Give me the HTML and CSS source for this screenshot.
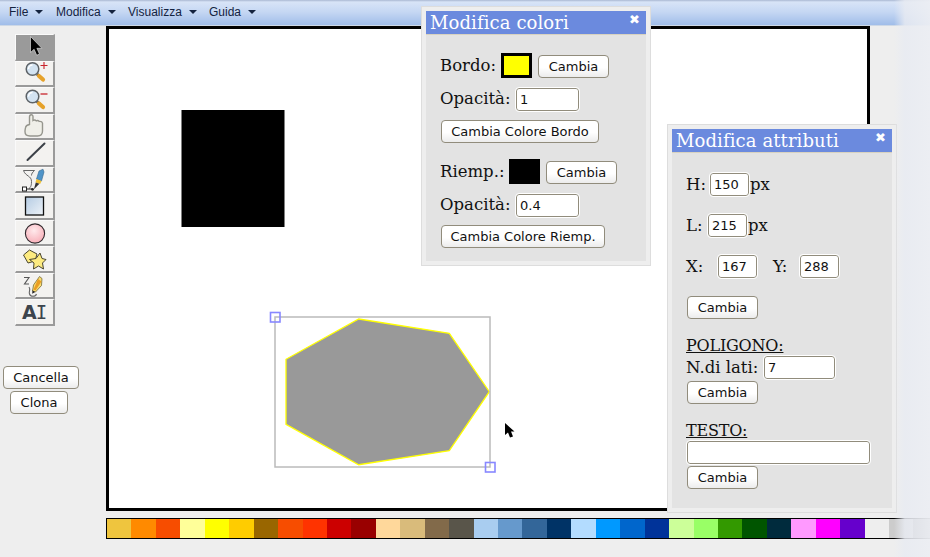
FILE: index.html
```html
<!DOCTYPE html>
<html lang="it">
<head>
    <meta charset="UTF-8">
    <title>Editor</title>
    <link rel="stylesheet" href="styles.css">
</head>
<body>
    <div class="menubar">
        <span class="menu-item menu-file">File</span>
        <span class="menu-item menu-modifica">Modifica</span>
        <span class="menu-item menu-visualizza">Visualizza</span>
        <span class="menu-item">Guida</span>
    </div>

    <div class="main">
        <div class="sidebar">
            <div class="tools">
                <div class="tool selected">
                    <svg class="icon" viewBox="0 0 37 24"><path d="M14.500 1.500v16l3.600-3.200 2.600 6 2.800-1.300-2.600-5.700h5z" fill="#000" stroke="#d8d8d8" stroke-width=".7"/></svg>
                </div>
                <div class="tool">
                    <svg class="icon" viewBox="0 0 37 24"><path d="M21 13l2.500 2.500" stroke="#555" stroke-width="3"/><path d="M23 15l4 3.500" stroke="#e6a22a" stroke-width="4.200" stroke-linecap="round"/><circle cx="16.500" cy="8" r="6.300" fill="#d3e3f1" stroke="#5d6266" stroke-width="1.500"/><path d="M12.500 8a4 4 0 0 1 4-4" fill="none" stroke="#fff" stroke-width="1.500"/><path d="M24.500 4.500h7M28 1v7" stroke="#c8242c" stroke-width="1.100"/></svg>
                </div>
                <div class="tool">
                    <svg class="icon" viewBox="0 0 37 24"><path d="M21 13.500l2.500 2.500" stroke="#555" stroke-width="3"/><path d="M23 15.500l4 3.500" stroke="#e6a22a" stroke-width="4.200" stroke-linecap="round"/><circle cx="16.500" cy="8.500" r="6.300" fill="#d3e3f1" stroke="#5d6266" stroke-width="1.500"/><path d="M12.500 8.500a4 4 0 0 1 4-4" fill="none" stroke="#fff" stroke-width="1.500"/><path d="M24.500 6h7" stroke="#c8242c" stroke-width="1.300"/></svg>
                </div>
                <div class="tool">
                    <svg class="icon" viewBox="0 0 37 24"><path d="M13.500 10.500V3q0-2.200 1.800-2.200T17 3v3.500q1.800-1 3.200.3 1.800-.8 3 .6 2.800-.3 3.300 1.800V17q0 5-5 5H14q-5 0-5-4.200 0-1.800.5-4.100.3-2.500 4-3.200z" fill="#efefe8" stroke="#96968e" stroke-width="1.400"/></svg>
                </div>
                <div class="tool">
                    <svg class="icon" viewBox="0 0 37 24"><path d="M11.500 19L28.500 2.500" stroke="#3c4148" stroke-width="2" stroke-linecap="round"/></svg>
                </div>
                <div class="tool">
                    <svg class="icon" viewBox="0 0 37 24"><path d="M7.500 2.500h11c-2 2-3 3-3 5M7.500 2.500c2 6 8 5 8 11s-1.500 5-2 7" fill="none" stroke="#555" stroke-width=".9"/><path d="M10 21h6" stroke="#222" stroke-width="1"/><path d="M20.500 11l2.500-8 4-1.800 1 2.800-2.500 9z" fill="#4f94c8" stroke="#35668c" stroke-width=".6"/><path d="M20.500 11l5 2-1.400 3-4.600-1.700z" fill="#f0c030"/><path d="M19.800 14.500l3.600 1.300-5.600 5.700z" fill="#333"/><rect x="6.500" y="19" width="4" height="4" fill="#fff" stroke="#222"/><circle cx="16.500" cy="21.300" r="1.400" fill="#222"/></svg>
                </div>
                <div class="tool">
                    <svg class="icon" viewBox="0 0 37 24"><defs><linearGradient id="rectFill" x1="0" y1="0" x2="1" y2="1"><stop offset="0" stop-color="#b4cbe3"/><stop offset="1" stop-color="#eef3f8"/></linearGradient></defs><rect x="9.500" y="3" width="18" height="18" fill="url(#rectFill)" stroke="#111" stroke-width="1.300"/></svg>
                </div>
                <div class="tool">
                    <svg class="icon" viewBox="0 0 37 24"><defs><radialGradient id="circleFill" cx=".45" cy=".35" r=".7"><stop offset="0" stop-color="#ffeaec"/><stop offset="1" stop-color="#f8acb6"/></radialGradient></defs><circle cx="19" cy="12.500" r="9.600" fill="url(#circleFill)" stroke="#30282c" stroke-width="1.100"/></svg>
                </div>
                <div class="tool">
                    <svg class="icon" viewBox="0 0 37 24"><polygon points="7.500,8 13.500,3 21,7 19,14 12,16" fill="#fdeb80" stroke="#4a4630"/><polygon points="24,6 26,11.500 30,12.500 26.500,16 27.500,22 22.500,19 17.500,22 18,16 13.500,12.500 20,11.500" fill="#fdeb80" stroke="#4a4630"/></svg>
                </div>
                <div class="tool">
                    <svg class="icon" viewBox="0 0 37 24"><path d="M8 3.500h5L8.500 10h4.500" fill="none" stroke="#555" stroke-width="1.100"/><path d="M13 13c2 3-.5 4 .5 7s6 3 7 0" fill="none" stroke="#666" stroke-width="1.100"/><path d="M16.500 17l1-6 6-8.500 2.500 2-.5 7-6 6.500z" fill="#f8dc70" stroke="#665a2a" stroke-width=".7"/><path d="M22 5l3.500 2.500-6 9-2-1z" fill="#ea9d22"/><path d="M16.500 16.500l-.3 3.300 3-1.700z" fill="#222"/></svg>
                </div>
                <div class="tool tool-text">A<span class="tool-text-i">I</span></div>
            </div>
            <div class="side-actions">
                <button class="btn btn-cancella">Cancella</button>
                <button class="btn btn-clona">Clona</button>
            </div>
        </div>

        <div class="stage">
            <div class="canvas">
                <svg class="drawing" width="758" height="479" viewBox="109 29 758 479">
                    <rect x="181.500" y="110" width="103" height="117" fill="#000"/>
                    <polygon points="358.700,319 449.300,333.300 489.300,391.700 449.300,450.700 358.700,464.700 286,424.300 286,359.300" fill="#999" stroke="#ff0" stroke-width="1.300"/>
                    <rect x="275" y="317" width="215" height="150" fill="none" stroke="#bbb" stroke-width="1.500"/>
                    <rect x="270.500" y="312.500" width="9.500" height="9.500" fill="none" stroke="#8888ff" stroke-width="1.600"/>
                    <rect x="485.500" y="462.500" width="9.500" height="9.500" fill="none" stroke="#8888ff" stroke-width="1.600"/>
                    <path d="M505 423v12l3-2.500 2 5 3-1-2-5h3.500z" fill="#000"/>
                </svg>
            </div>
            <div class="palette">
                <i></i><i></i><i></i><i></i><i></i><i></i><i></i><i></i><i></i><i></i><i></i>
                <i></i><i></i><i></i><i></i><i></i><i></i><i></i><i></i><i></i><i></i><i></i>
                <i></i><i></i><i></i><i></i><i></i><i></i><i></i><i></i><i></i><i></i><i></i>
            </div>
        </div>
    </div>

    <div class="window window-colori">
        <div class="window-inner">
            <div class="window-title">Modifica colori<span class="close">✖</span></div>
            <div class="row row-bordo">
                <label class="w-bordo">Bordo:</label>
                <span class="swatch swatch-yellow"></span>
                <button class="btn btn-cambia">Cambia</button>
            </div>
            <div class="row row-op1">
                <label class="w-op">Opacità:</label>
                <input class="field field-op" type="text" value="1">
            </div>
            <div class="row row-b1">
                <button class="btn btn-wide1">Cambia Colore Bordo</button>
            </div>
            <div class="row row-riemp">
                <label class="w-riemp">Riemp.:</label>
                <span class="swatch"></span>
                <button class="btn btn-cambia">Cambia</button>
            </div>
            <div class="row row-op2">
                <label class="w-op">Opacità:</label>
                <input class="field field-op" type="text" value="0.4">
            </div>
            <div class="row row-b2">
                <button class="btn btn-wide2">Cambia Colore Riemp.</button>
            </div>
        </div>
    </div>

    <div class="window window-attributi">
        <div class="window-inner">
            <div class="window-title">Modifica attributi<span class="close">✖</span></div>
            <div class="row row-h">
                <label class="w-h">H:</label>
                <input class="field field-small" type="text" value="150">
                <span class="unit">px</span>
            </div>
            <div class="row row-l">
                <label class="w-l">L:</label>
                <input class="field field-small" type="text" value="215">
                <span class="unit">px</span>
            </div>
            <div class="row row-xy">
                <label class="w-x">X:</label>
                <input class="field field-small" type="text" value="167">
                <label class="label-y">Y:</label>
                <input class="field field-small" type="text" value="288">
            </div>
            <div class="row row-apply">
                <button class="btn btn-cambia">Cambia</button>
            </div>
            <div class="section-title section-poligono">POLIGONO:</div>
            <div class="row row-lati">
                <label class="w-lati">N.di lati:</label>
                <input class="field field-lati" type="text" value="7">
            </div>
            <div class="row row-tight">
                <button class="btn btn-cambia">Cambia</button>
            </div>
            <div class="section-title section-testo">TESTO:</div>
            <div class="row row-testo">
                <input class="field field-testo" type="text">
            </div>
            <div class="row row-tight">
                <button class="btn btn-cambia">Cambia</button>
            </div>
        </div>
    </div>

    <div class="edge-glare"></div>
</body>
</html>
```

FILE: styles.css
```css
html, body {
    margin: 0;
    height: 100%;
}

body {
    position: relative;
    width: 930px;
    height: 557px;
    overflow: hidden;
    background-color: #eeeeee;
    font-family: "DejaVu Serif", serif;
    color: #111;
}

/* menu */
.menubar {
    display: flex;
    align-items: center;
    height: 26px;
    box-sizing: border-box;
    padding: 0 0 2px 9px;
    background: linear-gradient(#aab8d2 0, #d8e4f7 2px, #c5d7f3 12px, #a0bde9 25px, #cdd8e6 25px);
    font: 12px "Liberation Sans", Arial, sans-serif;
    color: #14233f;
}

.menu-item {
    display: flex;
    align-items: center;
}

.menu-item::after {
    content: "";
    margin-left: 7px;
    border-left: 4px solid transparent;
    border-right: 4px solid transparent;
    border-top: 4px solid #14233f;
}

.menu-file { width: 47px; }
.menu-modifica { width: 72px; }
.menu-visualizza { width: 81px; }

/* left column */
.main {
    display: flex;
}

.sidebar {
    width: 106px;
    flex: none;
}

.tools {
    width: 40px;
    margin: 8px 0 0 15px;
}

.tool {
    display: flex;
    align-items: center;
    justify-content: center;
    box-sizing: border-box;
    height: 26.55px;
    background-color: #f3f2f0;
    border-top: 1px solid #fafafa;
    border-left: 1px solid #fafafa;
    border-right: 2px solid #9a9a9a;
    border-bottom: 2px solid #9a9a9a;
}

.tool.selected {
    background-color: #9a9a9a;
}

.icon {
    display: block;
    width: 37px;
    height: 24px;
    overflow: visible;
}

.tool-text {
    font: bold 19px "DejaVu Sans", sans-serif;
    color: #3c444c;
}

.tool-text-i {
    font-family: "DejaVu Sans Mono", monospace;
    font-weight: normal;
    margin-left: -1px;
}

.side-actions {
    margin-top: 40px;
}

.btn {
    display: block;
    box-sizing: border-box;
    height: 23px;
    padding: 0;
    background: linear-gradient(#fff 55%, #ececec);
    border: 1px solid #918c7c;
    border-radius: 4px;
    font: 13px "DejaVu Sans", sans-serif;
    color: #111;
}

.btn-cancella {
    width: 76px;
    margin-left: 3px;
}

.btn-clona {
    width: 58px;
    margin: 2px 0 0 10px;
}

.btn-cambia { width: 71px; }
.btn-wide1 { width: 158px; }
.btn-wide2 { width: 164px; }

/* drawing area */
.canvas {
    box-sizing: border-box;
    width: 764px;
    height: 485px;
    background-color: #fff;
    border: 3px solid #000;
}

.drawing {
    display: block;
}

.palette {
    display: flex;
    width: 824px;
    height: 21px;
    box-sizing: border-box;
    margin-top: 7px;
    background-color: #999;
    border: 1px solid #000;
    border-right: none;
}

.palette i {
    flex: 0 0 24.45px;
    display: block;
}

.palette i:nth-child(1) { background: #efc53e; }
.palette i:nth-child(2) { background: #ff8a00; }
.palette i:nth-child(3) { background: #f74d00; }
.palette i:nth-child(4) { background: #ffff99; }
.palette i:nth-child(5) { background: #ffff00; }
.palette i:nth-child(6) { background: #ffcc00; }
.palette i:nth-child(7) { background: #996600; }
.palette i:nth-child(8) { background: #f74d00; }
.palette i:nth-child(9) { background: #ff3300; }
.palette i:nth-child(10) { background: #cc0000; }
.palette i:nth-child(11) { background: #990000; }
.palette i:nth-child(12) { background: #ffd89b; }
.palette i:nth-child(13) { background: #d9bb7b; }
.palette i:nth-child(14) { background: #826a4a; }
.palette i:nth-child(15) { background: #59554a; }
.palette i:nth-child(16) { background: #a9cdf0; }
.palette i:nth-child(17) { background: #6699cc; }
.palette i:nth-child(18) { background: #336699; }
.palette i:nth-child(19) { background: #003366; }
.palette i:nth-child(20) { background: #b3dcff; }
.palette i:nth-child(21) { background: #0099ff; }
.palette i:nth-child(22) { background: #0066cc; }
.palette i:nth-child(23) { background: #003399; }
.palette i:nth-child(24) { background: #ccff99; }
.palette i:nth-child(25) { background: #99ff66; }
.palette i:nth-child(26) { background: #339900; }
.palette i:nth-child(27) { background: #005500; }
.palette i:nth-child(28) { background: #002b3d; }
.palette i:nth-child(29) { background: #ff99ff; }
.palette i:nth-child(30) { background: #ff00ff; }
.palette i:nth-child(31) { background: #6600cc; }
.palette i:nth-child(32) { background: #eeeeee; }
.palette i:nth-child(33) { background: #cccccc; }

/* floating windows */
.window {
    position: absolute;
    box-sizing: border-box;
    padding: 4px;
    background-color: #eeeeee;
    border: 1px solid #dddddd;
}

.window-colori {
    left: 421px;
    top: 6px;
    width: 230px;
    height: 260px;
}

.window-attributi {
    left: 667px;
    top: 124px;
    width: 230px;
    height: 389px;
}

.window-inner {
    height: 100%;
    background-color: #e3e3e3;
}

.window-title {
    position: relative;
    height: 23px;
    padding-left: 4px;
    background-color: #6b8ade;
    border-bottom: 1px solid #d8d2c0;
    font-size: 18px;
    letter-spacing: 0.1px;
    line-height: 24px;
    color: #fff;
}

.close {
    position: absolute;
    right: 6px;
    top: -3px;
    font: 13px "DejaVu Sans", sans-serif;
    line-height: 24px;
}

.row {
    display: flex;
    align-items: flex-end;
    padding-left: 14px;
}

.row label, .unit {
    font-size: 16.5px;
    line-height: 23px;
    white-space: nowrap;
}

.w-bordo { width: 61px; }
.w-op { width: 76px; }
.w-riemp { width: 69px; }
.w-h { width: 24px; }
.w-l { width: 22px; }
.w-x { width: 32px; }
.w-lati { width: 78px; }

.window-colori .row label {
    line-height: 22px;
    margin-bottom: 1px;
}

.swatch {
    box-sizing: border-box;
    width: 31px;
    height: 25px;
    background-color: #000;
    margin-right: 6px;
}

.swatch-yellow {
    background-color: #ff0;
    border: 3px solid #000;
}

.field {
    box-sizing: border-box;
    height: 23px;
    padding: 0 3px;
    background-color: #fff;
    border: 1px solid #918c7c;
    border-radius: 3px;
    outline: 1px solid #fff;
    font: 13px "DejaVu Sans", sans-serif;
    color: #111;
}

.field-op { width: 63px; }
.field-small { width: 39px; }
.field-lati { width: 71px; }

.field-testo {
    width: 183px;
    margin-left: 1px;
}

.label-y {
    width: 27px;
    margin-left: 16px;
}

.unit { margin-left: 1px; }

.window .row-b1 .btn,
.window .row-b2 .btn,
.window-attributi .btn {
    margin-left: 1px;
}

.row-bordo { margin-top: 18px; }
.row-op1 { margin-top: 10px; }
.row-b1 { margin-top: 9px; }
.row-riemp { margin-top: 16px; }
.row-op2 { margin-top: 10px; }
.row-b2 { margin-top: 8px; }

.row-h { margin-top: 20px; }
.row-l { margin-top: 18px; }
.row-xy { margin-top: 18px; }
.row-apply { margin-top: 18px; }
.row-tight { margin-top: 2px; }
.row-testo { margin-top: 0; }

.section-title {
    padding-left: 14px;
    height: 21px;
    font-size: 16px;
    letter-spacing: -0.2px;
    line-height: 21px;
    text-decoration: underline;
}

.section-poligono { margin-top: 16px; }
.section-testo { margin-top: 16px; }

/* washed out strip along the right edge */
.edge-glare {
    position: absolute;
    right: 0;
    top: 0;
    bottom: 0;
    width: 36px;
    background: linear-gradient(90deg, rgba(238, 238, 238, 0), rgba(232, 235, 242, 0.85) 30%, rgba(236, 238, 243, 0.95));
}
```
